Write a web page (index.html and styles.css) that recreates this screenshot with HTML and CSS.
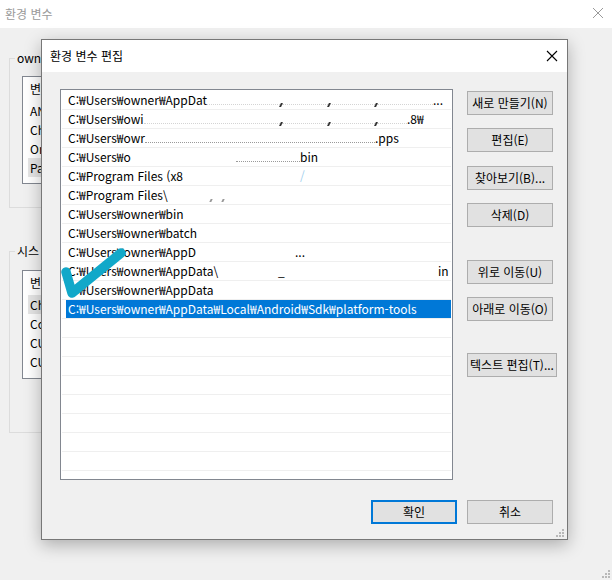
FILE: index.html
```html
<!DOCTYPE html>
<html lang="ko">
<head>
<meta charset="utf-8">
<title>환경 변수 편집</title>
<link rel="stylesheet" href="styles.css">
</head>
<body>
<div class="screen">
  <div class="bg-title">
    <span class="bg-title-text">환경 변수</span>
    <svg class="bg-close" width="12" height="12" viewBox="0 0 12 12"><path d="M1 1L11 11M11 1L1 11" stroke="#9a9a9a" stroke-width="1"/></svg>
  </div>
  <div class="bg-body">
    <div class="group g1">
      <span class="legend">own</span>
      <div class="plist l1">
        <div class="ph">변</div>
        <div class="pi">AN</div>
        <div class="pi">Ch</div>
        <div class="pi">Or</div>
        <div class="pi hl">Pa</div>
      </div>
    </div>
    <div class="group g2">
      <span class="legend">시스</span>
      <div class="plist l2">
        <div class="ph">변</div>
        <div class="pi hl">Ch</div>
        <div class="pi">Co</div>
        <div class="pi">CU</div>
        <div class="pi">CU</div>
      </div>
    </div>
  </div>

  <div class="dialog">
    <div class="d-title">
      <span class="d-title-text">환경 변수 편집</span>
      <svg class="d-close" width="12" height="12" viewBox="0 0 12 12"><path d="M1 1L11 11M11 1L1 11" stroke="#000" stroke-width="1.1"/></svg>
    </div>
    <div class="d-main">
      <div class="list">
        <div class="row"><span class="txt">
          <span class="seg w212"><span class="t">C:₩Users₩owner₩AppDat</span><span class="fill"></span></span>
          <span class="seg w48"><span class="mk"></span><span class="fill"></span></span>
          <span class="seg w47"><span class="mk"></span><span class="fill"></span></span>
          <span class="seg w58"><span class="mk"></span><span class="fill"></span></span>
          <span class="t">...</span>
        </span></div>
        <div class="row"><span class="txt">
          <span class="seg w212"><span class="t">C:₩Users₩owi</span><span class="fill"></span></span>
          <span class="seg w48"><span class="mk"></span><span class="fill"></span></span>
          <span class="seg w47"><span class="mk"></span><span class="fill"></span></span>
          <span class="seg w32"><span class="mk"></span><span class="fill"></span></span>
          <span class="t">.8₩</span>
        </span></div>
        <div class="row"><span class="txt">
          <span class="seg w307"><span class="t">C:₩Users₩owr</span><span class="fill dark"></span></span>
          <span class="t">.pps</span>
        </span></div>
        <div class="row"><span class="txt">
          <span class="seg w168"><span class="t">C:₩Users₩o</span></span>
          <span class="seg w64"><span class="fill dark"></span></span>
          <span class="t">bin</span>
        </span></div>
        <div class="row"><span class="txt">
          <span class="seg w232"><span class="t">C:₩Program Files (x8</span></span>
          <span class="t faint">/</span>
        </span></div>
        <div class="row"><span class="txt">
          <span class="seg w142"><span class="t">C:₩Program Files\</span></span>
          <span class="seg w12"><span class="mk low"></span></span>
          <span class="mk low"></span>
        </span></div>
        <div class="row"><span class="txt"><span class="t">C:₩Users₩owner₩bin</span></span></div>
        <div class="row"><span class="txt"><span class="t">C:₩Users₩owner₩batch</span></span></div>
        <div class="row"><span class="txt">
          <span class="seg w227"><span class="t">C:₩Users₩owner₩AppD</span></span>
          <span class="t">...</span>
        </span></div>
        <div class="row"><span class="txt">
          <span class="seg w210"><span class="t">C:₩Users₩owner₩AppData\</span></span>
          <span class="seg w160"><span class="t">_</span></span>
          <span class="t">in</span>
        </span></div>
        <div class="row"><span class="txt"><span class="t">C:₩Users₩owner₩AppData</span></span></div>
        <div class="row sel"><span class="txt"><span class="t">C:₩Users₩owner₩AppData₩Local₩Android₩Sdk₩platform-tools</span></span></div>
        <div class="row"></div>
        <div class="row"></div>
        <div class="row"></div>
        <div class="row"></div>
        <div class="row"></div>
        <div class="row"></div>
        <div class="row"></div>
        <div class="row"></div>
        <div class="row"></div>
      </div>
      <div class="btns">
        <button class="btn b-new">새로 만들기(N)</button>
        <button class="btn b-edit">편집(E)</button>
        <button class="btn b-browse">찾아보기(B)...</button>
        <button class="btn b-del">삭제(D)</button>
        <button class="btn b-up">위로 이동(U)</button>
        <button class="btn b-down">아래로 이동(O)</button>
        <button class="btn b-text">텍스트 편집(T)...</button>
      </div>
    </div>
    <div class="d-foot">
      <button class="btn ok">확인</button>
      <button class="btn">취소</button>
    </div>
    <svg class="grip d-grip" width="9" height="9" viewBox="0 0 9 9"><g fill="#b8b8b8"><rect x="6" y="0" width="2" height="2"/><rect x="3" y="3" width="2" height="2"/><rect x="6" y="3" width="2" height="2"/><rect x="0" y="6" width="2" height="2"/><rect x="3" y="6" width="2" height="2"/><rect x="6" y="6" width="2" height="2"/></g></svg>
  </div>

  <svg class="check" width="80" height="70" viewBox="0 0 80 70"><path d="M16 37 L22 58 L71 18" fill="none" stroke="#11a8c9" stroke-width="9.5" stroke-linecap="round" stroke-linejoin="round"/></svg>
  <svg class="grip w-grip" width="9" height="9" viewBox="0 0 9 9"><g fill="#b8b8b8"><rect x="6" y="0" width="2" height="2"/><rect x="3" y="3" width="2" height="2"/><rect x="6" y="3" width="2" height="2"/><rect x="0" y="6" width="2" height="2"/><rect x="3" y="6" width="2" height="2"/><rect x="6" y="6" width="2" height="2"/></g></svg>
</div>
</body>
</html>
```

FILE: styles.css
```css
html, body {
  margin: 0;
  padding: 0;
}
body {
  background: #f0f0f0;
  font-family: "Noto Sans CJK KR", "Noto Sans", sans-serif;
  font-size: 12px;
  color: #000;
}
.screen {
  position: relative;
  width: 612px;
  height: 580px;
  overflow: hidden;
  background: #f0f0f0;
}
.bg-title {
  height: 28px;
  background: #fff;
  display: flex;
  align-items: center;
  justify-content: space-between;
  padding: 0 8px 2px 5px;
  box-sizing: border-box;
}
.bg-title-text {
  color: #9a9a9a;
  font-size: 12px;
}
.bg-close {
  display: block;
}
.bg-body {
  padding: 30px 0 0 9px;
}
.group {
  width: 220px;
  border: 1px solid #dcdcdc;
  box-sizing: border-box;
}
.g1 { height: 150px; }
.g2 { height: 182px; margin-top: 43px; }
.legend {
  display: block;
  width: max-content;
  margin: -9px 0 0 5px;
  padding: 0 2px;
  line-height: 16px;
  background: #f0f0f0;
}
.plist {
  margin-left: 12px;
  width: 180px;
  background: #fff;
  border: 1px solid #828790;
  box-sizing: border-box;
}
.l1 { height: 108px; margin-top: 10px; }
.l2 { height: 109px; margin-top: 11px; }
.ph {
  height: 24px;
  line-height: 24px;
  padding-left: 7px;
}
.pi {
  height: 19px;
  line-height: 19px;
  margin-left: 5px;
  padding-left: 2px;
}
.pi.hl { background: #e5e5e5; }

/* dialog */
.dialog {
  position: absolute;
  left: 41px;
  top: 39px;
  width: 527px;
  height: 501px;
  box-sizing: border-box;
  border: 1px solid #777;
  background: #f0f0f0;
  box-shadow: 0 5px 16px rgba(0,0,0,0.28);
  display: flex;
  flex-direction: column;
}
.d-title {
  height: 31px;
  background: #fff;
  display: flex;
  align-items: center;
  justify-content: space-between;
  padding: 0 9px 1px 8px;
  flex: none;
}
.d-title-text { font-size: 12px; }
.d-close { display: block; }
.d-main {
  display: flex;
  padding: 17px 14px 0 18px;
  gap: 14px;
}
.list {
  width: 393px;
  height: 391px;
  box-sizing: border-box;
  border: 1px solid #828790;
  background: #fff;
  padding: 1px 1px 0;
  overflow: hidden;
  flex: none;
}
.row {
  height: 19px;
  box-sizing: border-box;
  border-bottom: 1px solid #efefef;
  padding-left: 4px;
  display: flex;
}
.txt {
  display: flex;
  align-items: center;
  flex: 1;
  padding-left: 2px;
  white-space: nowrap;
  line-height: 18px;
  overflow: hidden;
}
.row.sel .txt {
  background: #0078d7;
  color: #fff;
}
.seg {
  display: flex;
  align-items: center;
  flex: none;
  height: 18px;
}
.seg .t { flex: none; }
.fill {
  flex: 1;
  align-self: flex-end;
  margin-bottom: 4px;
  border-bottom: 1px dotted #d4d4d4;
}
.fill.dark { border-bottom-color: #9a9a9a; }
.mk {
  flex: none;
  display: block;
  width: 2px;
  height: 4px;
  background: #333;
  align-self: flex-end;
  margin-bottom: 2px;
  transform: skewX(-25deg);
}
.mk.low { background: #999; height: 3px; }
.faint { color: #9fd0ee; }
.w12 { width: 12px; }
.w32 { width: 32px; }
.w47 { width: 47px; }
.w48 { width: 48px; }
.w58 { width: 58px; }
.w64 { width: 64px; }
.w142 { width: 142px; }
.w160 { width: 160px; }
.w168 { width: 168px; }
.w210 { width: 210px; }
.w212 { width: 212px; }
.w227 { width: 227px; }
.w232 { width: 232px; }
.w307 { width: 307px; }

.btns {
  display: flex;
  flex-direction: column;
  align-items: flex-start;
  padding-top: 2px;
}
.btn {
  font-family: "Noto Sans CJK KR", "Noto Sans", sans-serif;
  font-size: 12px;
  color: #000;
  background: #e1e1e1;
  border: 1px solid #adadad;
  width: 86px;
  height: 24px;
  padding: 0;
  margin: 0;
  box-sizing: border-box;
  white-space: nowrap;
  line-height: 20px;
  text-align: center;
}
.b-edit { margin-top: 13px; }
.b-browse { margin-top: 14px; }
.b-del { margin-top: 13px; }
.b-up { margin-top: 33px; }
.b-down { margin-top: 13px; }
.b-text { margin-top: 32px; width: 90px; }
.d-foot {
  display: flex;
  justify-content: flex-end;
  gap: 10px;
  padding: 20px 14px 0 0;
}
.btn.ok {
  border: 2px solid #0078d7;
}
.grip {
  position: absolute;
  display: block;
}
.d-grip { right: 2px; bottom: 1px; }
.w-grip { right: 1px; bottom: 1px; }
.check {
  position: absolute;
  left: 50px;
  top: 235px;
}
```
